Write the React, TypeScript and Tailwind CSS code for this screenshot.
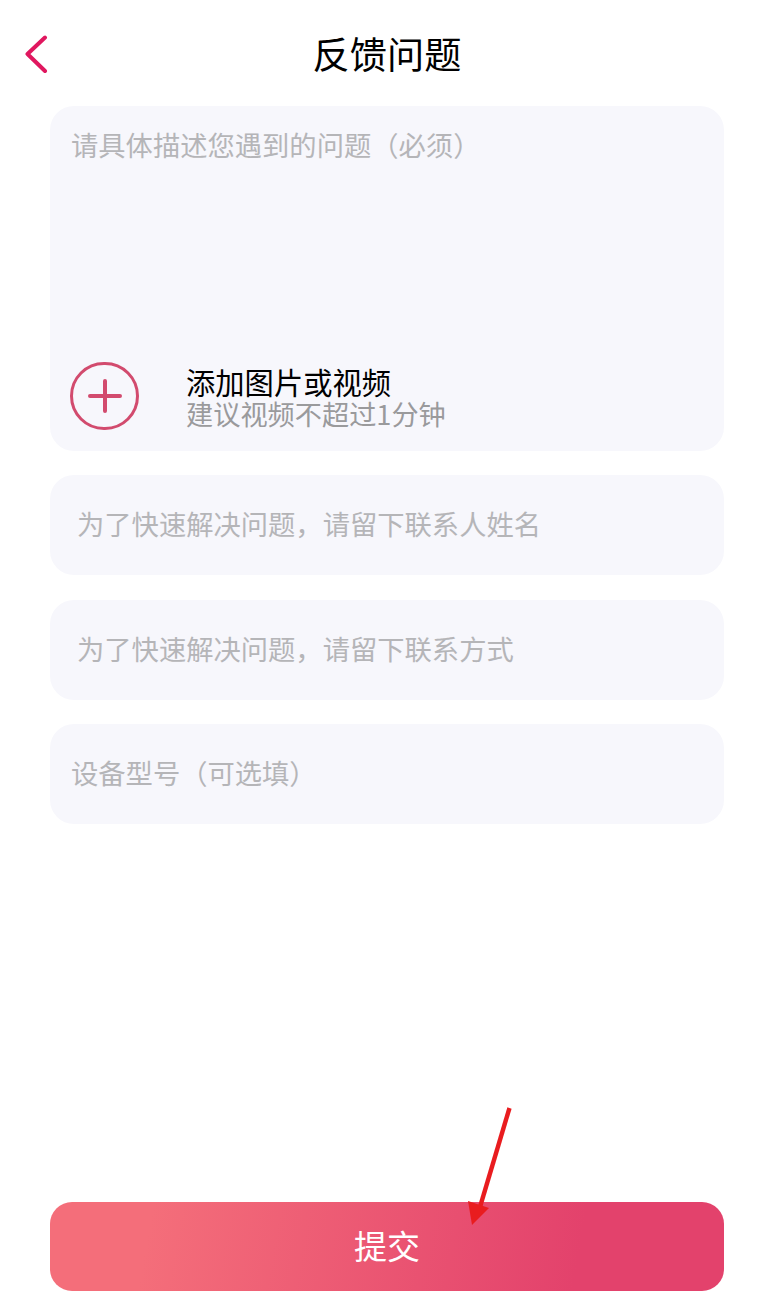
import React from 'react';

const font = { fontFamily: '"Noto Sans CJK SC", "Noto Sans", sans-serif' };

const Field: React.FC<{ text: string; indent?: boolean }> = ({ text, indent }) => (
  <div className={`h-[100px] rounded-[24px] bg-[#f7f7fc] flex items-center pb-[2px] text-[27.3px] leading-none text-[#b5b5b8] ${indent ? 'pl-[27px]' : 'pl-[21px]'}`}>
    {text}
  </div>
);

export default function App() {
  return (
    <div style={font} className="relative w-[763px] h-[1315px] bg-white flex flex-col overflow-hidden">
      {/* Header */}
      <header className="relative h-[106px] flex items-start justify-center shrink-0">
        <button className="absolute left-[24px] top-[35px]">
          <svg width="25" height="39" viewBox="0 0 25 39" fill="none">
            <path d="M21 2.5 L3.5 19 L21 36" stroke="#e0175f" strokeWidth="4" strokeLinecap="round" strokeLinejoin="round" />
          </svg>
        </button>
        <h1 className="mt-[31px] ml-[11px] text-[37.2px] leading-[44px] font-normal text-black">反馈问题</h1>
      </header>

      <main className="pl-[50px] pr-[39px] flex flex-col flex-1">
        {/* Description box */}
        <section className="h-[345px] rounded-[24px] bg-[#f7f7fc] flex flex-col justify-between pl-[20px] pt-[21px] pb-[21px]">
          <p className="pl-[1px] text-[27.3px] leading-[34px] text-[#b5b5b8]">请具体描述您遇到的问题（必须）</p>
          <div className="flex items-center">
            <div className="w-[69px] h-[68px] rounded-full border-[3px] border-[#d24b6e] flex items-center justify-center shrink-0">
              <svg width="34" height="34" viewBox="0 0 34 34" fill="none">
                <path d="M2 17 H32 M17 2 V32" stroke="#d24b6e" strokeWidth="4" strokeLinecap="round" />
              </svg>
            </div>
            <div className="ml-[47px] flex flex-col">
              <span className="text-[29.3px] leading-[33px] text-black">添加图片或视频</span>
              <span className="text-[27.2px] leading-[30px] text-[#9a9a9c]">建议视频不超过1分钟</span>
            </div>
          </div>
        </section>

        <div className="mt-[24px] flex flex-col gap-[25px]">
          <Field indent text="为了快速解决问题，请留下联系人姓名" />
          <Field indent text="为了快速解决问题，请留下联系方式" />
          <div className="-mt-[1px]">
            <Field text="设备型号（可选填）" />
          </div>
        </div>

        <button className="mt-auto mb-[24px] h-[89px] rounded-[22px] bg-[linear-gradient(100deg,#f46e7a_15%,#e3426c_78%)] text-white text-[33px] leading-none pb-[2px]">
          提交
        </button>
      </main>

      {/* Red annotation arrow */}
      <svg className="absolute left-[460px] top-[1100px]" width="60" height="130" viewBox="0 0 60 130" fill="none">
        <path d="M49.5 8 L20 107" stroke="#e91c1f" strokeWidth="4.4" />
        <path d="M8 101 L29 108 L12 125 Z" fill="#e91c1f" />
      </svg>
    </div>
  );
}
